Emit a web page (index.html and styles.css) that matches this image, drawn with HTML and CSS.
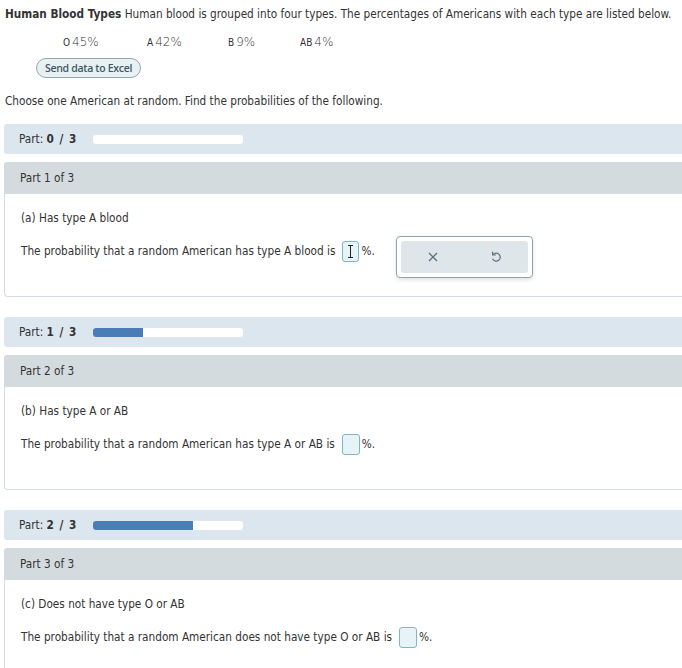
FILE: index.html
```html
<!DOCTYPE html>
<html>
<head>
<meta charset="utf-8">
<link rel="stylesheet" href="styles.css">
</head>
<body>
<div class="page">
  <p class="intro"><b>Human Blood Types</b> Human blood is grouped into four types. The percentages of Americans with each type are listed below.</p>
  <div class="types">
    <span class="type"><span class="lbl">O</span><span class="num">45%</span></span>
    <span class="type"><span class="lbl">A</span><span class="num">42%</span></span>
    <span class="type"><span class="lbl">B</span><span class="num">9%</span></span>
    <span class="type"><span class="lbl">AB</span><span class="num">4%</span></span>
  </div>
  <div class="btnrow"><button class="excel">Send data to Excel</button></div>
  <p class="choose">Choose one American at random. Find the probabilities of the following.</p>

  <div class="partbar"><span class="plabel">Part: <b>0 / 3</b></span><div class="prog"><div class="fill" style="width:0%"></div></div></div>
  <div class="parthead">Part 1 of 3</div>
  <div class="partbody">
    <p class="q">(a) Has type A blood</p>
    <div class="ansrow">
      <span>The probability that a random American has type A blood is</span>
      <span class="box active"><span class="ibeam"></span></span><span class="pct">%.</span>
      <div class="tools">
        <div class="toolsin">
          <svg width="12" height="12" viewBox="0 0 12 12"><path d="M2 2L10 10M10 2L2 10" stroke="#56707c" stroke-width="1.3" fill="none"/></svg>
          <svg width="12" height="13" viewBox="0 0 12 13"><path d="M3.2 4.6A4 4 0 1 1 2.6 8.8" stroke="#56707c" stroke-width="1.2" fill="none"/><path d="M2.6 1.8V5H5.8" stroke="#56707c" stroke-width="1.2" fill="none"/></svg>
        </div>
      </div>
    </div>
  </div>

  <div class="partbar"><span class="plabel">Part: <b>1 / 3</b></span><div class="prog"><div class="fill" style="width:33.3%"></div></div></div>
  <div class="parthead">Part 2 of 3</div>
  <div class="partbody">
    <p class="q">(b) Has type A or AB</p>
    <div class="ansrow">
      <span>The probability that a random American has type A or AB is</span>
      <span class="box"></span><span class="pct">%.</span>
    </div>
  </div>

  <div class="partbar"><span class="plabel">Part: <b>2 / 3</b></span><div class="prog"><div class="fill" style="width:66.6%"></div></div></div>
  <div class="parthead">Part 3 of 3</div>
  <div class="partbody">
    <p class="q">(c) Does not have type O or AB</p>
    <div class="ansrow">
      <span>The probability that a random American does not have type O or AB is</span>
      <span class="box"></span><span class="pct">%.</span>
    </div>
  </div>
</div>
</body>
</html>
```
FILE: styles.css
```css
html { overflow: hidden; }
body {
  margin: 0;
  font-family: "DejaVu Sans Condensed", "DejaVu Sans", sans-serif;
  font-size: 11.7px;
  color: #333;
  background: #fff;
}
.page {
  padding: 7px 0 0 4px;
}
p { margin: 0; }
.intro {
  padding-left: 1px;
  line-height: 14px;
  white-space: nowrap;
}
.types {
  display: flex;
  margin-top: 14px;
  padding-left: 59px;
  height: 14px;
  align-items: center;
}
.type {
  display: flex;
  align-items: baseline;
  gap: 2px;
}
.type:nth-child(1) { width: 84px; }
.type:nth-child(2) { width: 81px; }
.type:nth-child(3) { width: 72px; }
.lbl { font-size: 10px; }
.num { font-family: "DejaVu Sans", sans-serif; font-size: 12px; font-weight: 300; }
.btnrow { margin-top: 9px; padding-left: 32px; }
.excel {
  font-family: "Open Sans", "Liberation Sans", sans-serif;
  font-size: 10.5px;
  letter-spacing: -0.3px;
  font-weight: 600;
  color: #3c5a66;
  background: #e8f0f2;
  border: 1px solid #8eaab4;
  border-radius: 10px;
  height: 20px;
  padding: 0 8px;
  line-height: 18px;
}
.choose {
  margin-top: 16px;
  padding-left: 1px;
  line-height: 14px;
}
.partbar {
  margin-top: 16px;
  height: 30px;
  background: #dbe6ee;
  border-radius: 3px 0 0 3px;
  display: flex;
  align-items: center;
  padding-left: 15px;
}
.partbar + .parthead { margin-top: 8px; }
.partbody + .partbar { margin-top: 20px; }
.plabel { width: 74px; }
.plabel b { word-spacing: 2px; }
.prog {
  width: 150px;
  height: 9px;
  background: #fff;
  border-radius: 3px;
  overflow: hidden;
}
.fill { height: 100%; background: #4a7db5; }
.parthead {
  height: 32px;
  background: #d3dbde;
  border-radius: 3px 0 0 0;
  display: flex;
  align-items: center;
  padding-left: 16px;
}
.partbody {
  height: 102px;
  border-left: 1px solid #d4dee2;
  border-bottom: 1px solid #d4dee2;
  border-radius: 0 0 0 4px;
  padding-left: 16px;
}
.q {
  padding-top: 17px;
  line-height: 14px;
}
.ansrow {
  margin-top: 14px;
  display: flex;
  align-items: center;
  height: 24px;
}
.box {
  display: inline-block;
  box-sizing: border-box;
  width: 18px;
  height: 21px;
  margin-left: 7px;
  border: 1px solid #7db8c4;
  background: #e6f4f8;
  border-radius: 3px;
  position: relative;
}
.box.active { width: 17px; }
.ibeam {
  position: absolute;
  left: 7px;
  top: 3px;
  width: 1px;
  height: 13px;
  background: #222;
}
.ibeam::before, .ibeam::after {
  content: "";
  position: absolute;
  left: -2px;
  width: 5px;
  height: 1px;
  background: #222;
}
.ibeam::before { top: 0; }
.ibeam::after { bottom: 0; }
.pct { margin-left: 2px; }
.tools {
  margin-left: 21px;
  margin-top: 11px;
  width: 137px;
  height: 42px;
  box-sizing: border-box;
  border: 1px solid #91a6ae;
  border-radius: 4px;
  background: #fff;
  box-shadow: 0 2px 4px rgba(0,0,0,0.12);
  padding: 4px;
}
.toolsin {
  height: 100%;
  background: #dfe6e9;
  border-radius: 3px;
  display: flex;
  align-items: center;
  justify-content: space-between;
  padding: 0 26px;
}
```
